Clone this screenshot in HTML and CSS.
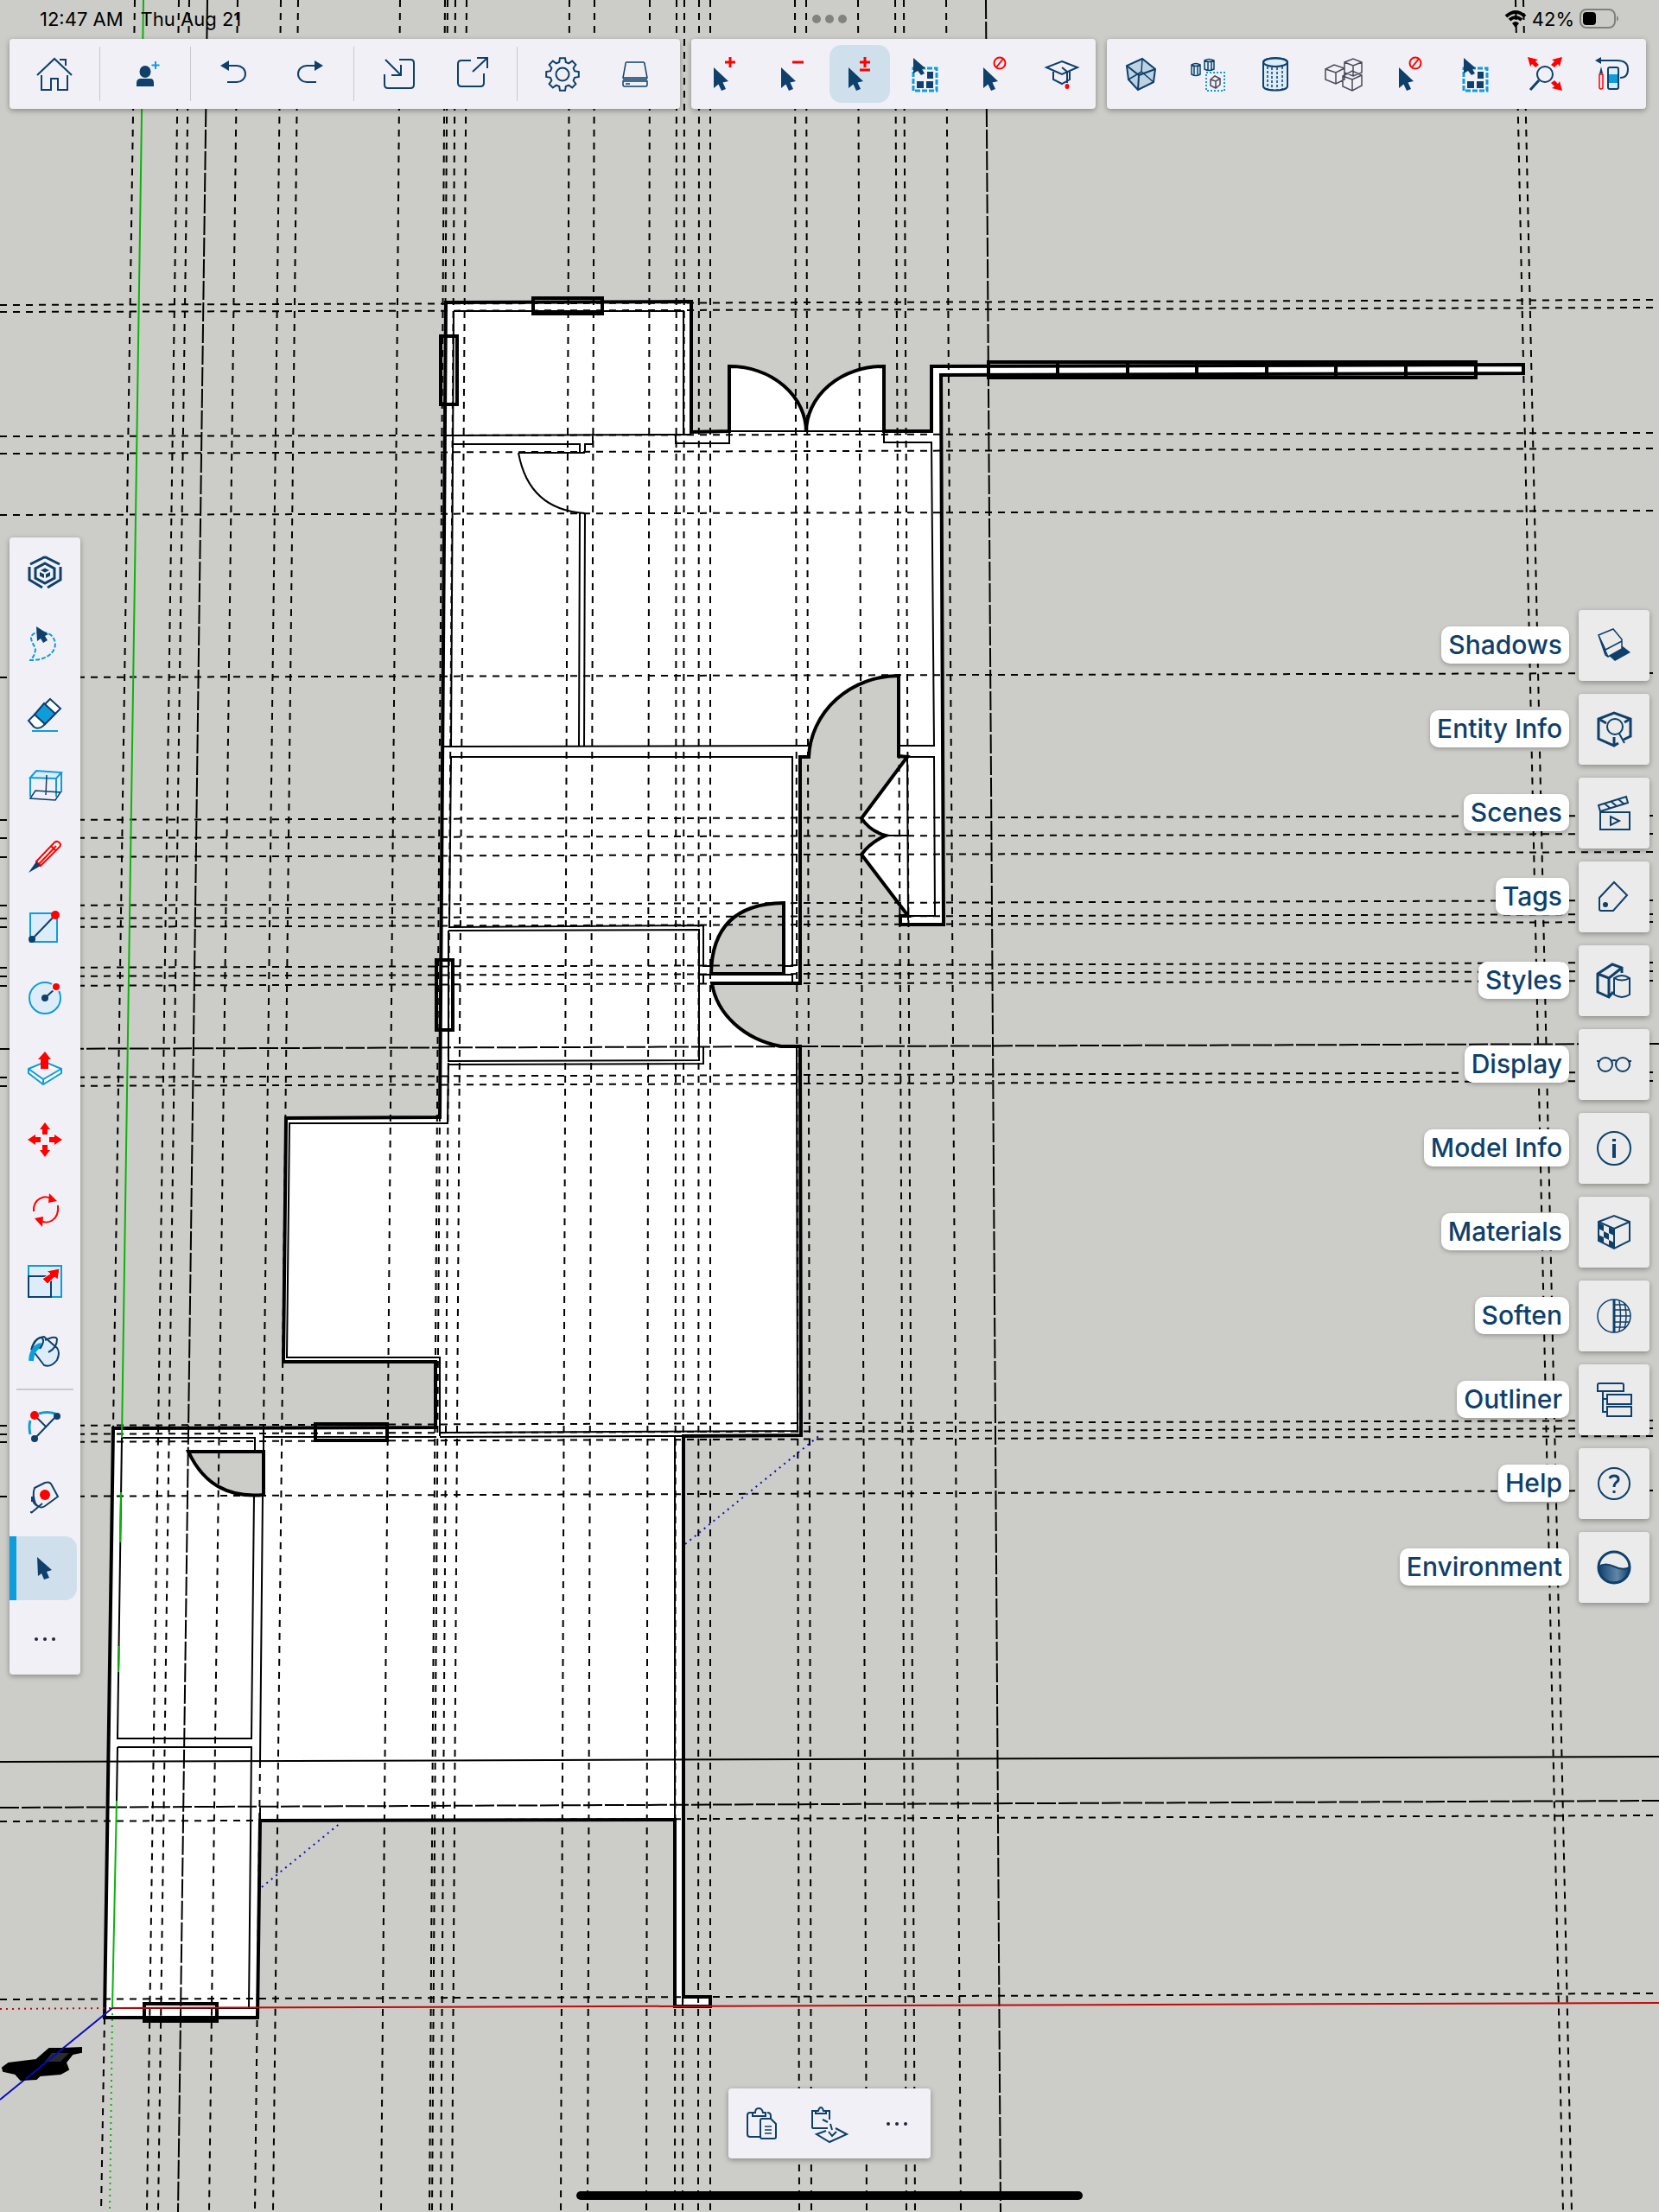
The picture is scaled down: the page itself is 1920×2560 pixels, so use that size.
FILE: index.html
```html
<!DOCTYPE html>
<html lang="en">
<head>
<meta charset="utf-8">
<meta name="viewport" content="width=device-width, initial-scale=1">
<title>Floor plan</title>
<link rel="stylesheet" href="styles.css">
</head>
<body>
<div class="app">
<svg class="model" viewBox="0 0 1920 2560" preserveAspectRatio="xMidYMid slice" role="img" aria-label="Floor plan model">
  <!-- outer shell -->
  <path class="face heavy" d="M516 350L800 349V500L844 499V424A89 76 0 0 1 933 500A89 76 0 0 1 1023 424V499H1078V424L1763 422V432L1089 434L1092 1070H1042V1060H1051L997 989Q1007 975 1025 967Q1007 962 997 947L1050 876L1040 875V782A104 98 0 0 0 936 876H926V1138H824A104 86 0 0 0 904 1211H926L927 1661L791 1662V2311H822V2322H781V2106L301 2107L298 2335H121L131 1653L504 1652V1576H328L331 1294L509 1293Z"/>
  <path class="gap heavy" d="M907 1045V1127H823Q824 1046 907 1045Z"/>
  <path class="gap heavy" d="M218 1680H305V1730Q244 1736 218 1680Z"/>
  <!-- inner wall faces -->
  <path class="thin" d="M516 504L791 503M525 360H791V503M525 360L522 864M523 514H671V523M677 523V514H686M686 504V514M671 594L670 864M677 594L676 864M512 864L937 863M600 524H677M600 524Q612 590 677 594"/>
  <path class="thin" d="M800 503H782V513H844V499H1023V512H1078L1081 863H1040M1050 876H1081L1082 1060H1042M1050 876L1051 1065M1025 967H1051"/>
  <path class="thin" d="M522 876H917V1118H908M522 876L520 1073L814 1071V1118H823M519 1077L809 1076V1227L519 1228V1077M809 1128H917V1138M814 1128V1138M814 1212V1231L519 1232L518 1300H335L332 1571H509V1662M509 1658L923 1656M922 1211L923 1656M509 1663L791 1662"/>
  <path class="thin" d="M505 1663H305M305 1653V1680M295 1680V1664H141L136 2012H291L294 1731M136 2022H291L288 2324M301 2092V2107M304 1731L301 2038M781 1662V2106M136 2022L135 2084M790 2311V2322M130 2324H298"/>
  <!-- windows -->
  <path class="heavy" d="M617 345H697V363H617ZM510 389H529V468H510ZM505 1111H524V1192H505ZM365 1648H448V1667H365ZM167 2319H251V2339H167ZM1144 419H1708V437H1144ZM1224 419V437M1305 419V437M1385 419V437M1466 419V437M1546 419V437M1627 419V437"/>
  <path class="thin" d="M519 1111V1192"/>
  <!-- vertical guides -->
  <path class="guide" d="M156 0L131 1653M121 2335L117 2560M207 0L170 2560M219 0L183 2560M275 0L242 2560M325 0L305 1653M301 2038L295 2560M345 0L316 2560M463 0L441 2560M515 0L497 2560M518 0L500 2560M527 0L510 2560M540 0L523 2560M659 0L649 2560M688 0L680 2560M752 0L748 2560M783 0L781 2560M792 0L790 2560M809 0L808 2560M822 0V2560M920 0L925 2560M933 0L939 2560M993 0L1003 2560M1036 0L1049 2560M1046 0L1059 2560M1095 0L1112 2560M1754 0L1809 2560M1763 0L1819 2560"/>
  <path class="guide-long" d="M240 0L206 2560M1141 0L1158 2560M0 1214L1920 1208M0 2092L1920 2084"/>
  <!-- horizontal guides -->
  <path class="guide" d="M0 353L1920 347M0 361L1920 356M0 505L1920 501M0 525L1920 519M0 596L1920 591M0 784L1920 779M0 949L1920 944M0 970L1920 965M0 992L1920 986M0 1048L1920 1042M0 1063L1920 1058M0 1073L1920 1067M0 1120L1920 1114M0 1130L1920 1124M0 1141L1920 1135M0 1247L1920 1241M0 1257L1920 1251M0 1650L1920 1644M0 1660L1920 1653M0 1669L1920 1662M0 1732L1920 1725M0 2108L1920 2101M0 2314L1920 2307"/>
  <path class="thin" d="M0 2039L1920 2033"/>
  <!-- axes -->
  <path class="axis green" d="M166 0L141 1664M140 1727L139 1785M138 1905L137 1935M135 2084L130 2324"/>
  <path class="axis red" d="M130 2324L1920 2318"/>
  <path class="axis blue" d="M130 2324L0 2430"/>
  <path class="axis green dotted" d="M130 2330L127 2560"/>
  <path class="axis red dotted" d="M0 2325L130 2324"/>
  <path class="axis blue dotted" d="M303 2184L395 2109M793 1787L950 1660"/>
  <!-- scale figure -->
  <path class="figure" d="M3 2393L10 2388 42 2384 57 2371H72L94 2370 94 2375 84 2377 76 2387 79 2395 70 2400 46 2402 42 2406 24 2407 18 2400 4 2397Z"/>
  <path class="coat" d="M60 2376H80L70 2386H52Z"/>
  <path class="axis blue" d="M75 2369L30 2406"/>
</svg>

<header class="top">
  <div class="status">
    <div class="status-side"><span>12:47 AM</span><span>Thu Aug 21</span></div>
    <div class="multitask"><i></i><i></i><i></i></div>
    <div class="status-side status-right">
      <svg width="26" height="22" viewBox="0 0 26 22"><path d="M2 8Q13-2 24 8M6 12Q13 6 20 12" fill="none" stroke="#000" stroke-width="4"/><path d="M9 16Q13 12 17 16L13 21Z"/></svg>
      <span>42%</span>
      <svg width="46" height="24" viewBox="0 0 46 24"><rect x="1" y="1" width="40" height="21" rx="7" fill="none" stroke="#80807c" stroke-width="2"/><rect x="4" y="4" width="15" height="15" rx="4"/><path d="M43 8q4 3.500 0 7z" fill="#80807c"/></svg>
    </div>
  </div>
  <div class="toolbars">
    <nav class="bar main-bar" aria-label="Main">
      <div class="group"><button aria-label="Home"><svg class="ic" viewBox="0 0 40 40"><path d="M0 21L20 2L40 21M26 3H33V10M5 21V38H16V25H24V38H35V21"/></svg></button></div>
      <div class="group"><button aria-label="Add person"><svg class="ic" viewBox="0 0 40 40"><g class="nf"><ellipse cx="20" cy="17" rx="6.500" ry="7"/><path d="M10 34V30Q10 25 15 25H26Q30 25 30 30V34Z"/></g><path class="b" d="M32 5V14M27.500 9.500H36.500"/></svg></button></div>
      <div class="group"><button aria-label="Undo"><svg class="ic" viewBox="0 0 40 40"><path class="nf" d="M2 10L12 4V16Z"/><path d="M11 10H21A10 9.500 0 0 1 21 29H10"/></svg></button><button aria-label="Redo"><svg class="ic" viewBox="0 0 40 40"><path class="nf" d="M37 10L27 4V16Z"/><path d="M28 10H18A10 9.500 0 0 0 18 29H29"/></svg></button></div>
      <div class="group"><button aria-label="Import"><svg class="ic" viewBox="0 0 40 40"><path d="M20 3H33Q37 3 37 7V32Q37 36 33 36H7Q3 36 3 32V20M4 3L21 20M22 9V21H11"/></svg></button><button aria-label="Export"><svg class="ic" viewBox="0 0 40 40"><path d="M19 4H8Q4 4 4 8V30Q4 34 8 34H30Q34 34 34 30V19M21 17L37 2M26 1H38V13"/></svg></button></div>
      <div class="group"><button aria-label="Settings"><svg class="ic" viewBox="-20 -20 40 40"><path d="M14-3.800L18.800-3V3L14 3.800 12.600 7.200 15.400 11.200 11.200 15.400 7.200 12.600 3.800 14 3 18.800H-3L-3.800 14-7.200 12.600-11.200 15.400-15.400 11.200-12.600 7.200-14 3.800-18.800 3V-3L-14-3.800-12.600-7.200-15.400-11.200-11.200-15.400-7.200-12.600-3.800-14-3-18.800H3L3.800-14 7.200-12.600 11.200-15.400 15.400-11.200 12.600-7.200Z"/><circle r="7.500"/></svg></button><button aria-label="Device"><svg class="ic s" viewBox="0 0 40 40"><path d="M10 6H29Q31 6 31 8L34 24H6L9 8Q9 6 10 6ZM6 28H34V32Q34 34 32 34H8Q6 34 6 32ZM9 31H14M6 26H34"/></svg></button></div>
    </nav>
    <nav class="bar" aria-label="Selection">
      <button aria-label="Add to selection"><svg class="ic" viewBox="0 0 40 40"><path class="nf" id="cur" d="M7 12L24 28L17.500 29.500L21 37L16 39L12.500 31.500L7 36Z"/><path class="r w" d="M26 0V12M20 6H32"/></svg></button>
      <button aria-label="Subtract from selection"><svg class="ic" viewBox="0 0 40 40"><use href="#cur" class="nf"/><path class="r w" d="M20 6H33"/></svg></button>
      <button class="on" aria-label="Toggle selection" aria-pressed="true"><svg class="ic" viewBox="0 0 40 40"><use href="#cur" class="nf"/><path class="r w" d="M26 0V12M20 6H32M20 15H32"/></svg></button>
      <button aria-label="Select all"><svg class="ic" viewBox="0 0 40 40"><g id="selall"><rect class="b w" x="4" y="13" width="27" height="26" stroke-dasharray="6 2"/><path class="nf" stroke="#f1f0f6" stroke-width="1" d="M4 1L18 13L14 14L17 19L13 21L9 16L4 19Z"/><path class="nf" d="M20 17H27V25H20ZM8 28H16V36H8ZM19 28H27V36H19Z"/></g></svg></button>
      <button aria-label="Clear selection"><svg class="ic" viewBox="0 0 40 40"><use href="#cur" class="nf"/><g id="ban" class="r"><circle cx="26" cy="7" r="6.500"/><path d="M22 12L30 2"/></g></svg></button>
      <button aria-label="Learn"><svg class="ic" viewBox="0 0 40 40"><path d="M20 5L38 12L20 20L2 12ZM10 17V26L20 31L29 26V17M20 12L26 17V30"/><ellipse cx="26" cy="34" rx="2.500" ry="3" fill="red" stroke="none"/></svg></button>
    </nav>
    <nav class="bar" aria-label="View">
      <button aria-label="X-ray"><svg class="ic" viewBox="0 0 40 40"><path fill="#bdd2e2" d="M22 2L4 10L6 26L17 38L35 29L37 14Z"/><path d="M4 10L18 21L37 14M18 21L17 38"/><path class="s" d="M22 2L21 17M6 26L21 17L35 29"/></svg></button>
      <button aria-label="Hide similar"><svg class="ic s" viewBox="0 0 40 40"><path fill="#dcedf9" d="M1 9V20Q6 23 11 20V9Q6 6 1 9ZM16 4V14Q21 17 27 14V4Q21 1 16 4ZM1 9Q6 12 11 9M16 4Q21 7 27 4M4 11V20M8 11V20M20 6V15M24 6V15"/><rect class="b" x="18" y="18" width="21" height="21" stroke-width="2" stroke-dasharray="2 2"/><path class="k" d="M23 26L28 22L34 25V32L29 36L23 33ZM23 26L29 28L34 25M29 28V36"/></svg></button>
      <button aria-label="Component"><svg class="ic" viewBox="0 0 40 40"><path fill="#dcedf9" d="M6 6V34C7 40 33 40 34 34V6C33 0 7 0 6 6Z"/><ellipse cx="20" cy="6" rx="14" ry="5"/><path class="s" stroke-dasharray="3 2" d="M11 11V37M16 12V38M22 12V38M28 11V37"/></svg></button>
      <button aria-label="Hide rest"><svg class="ic s k" viewBox="0 0 40 40"><path fill="#f1f0f6" d="M22 6L32 2L42 6V18L32 22L22 18ZM22 6L32 10L42 6M32 10V22M0 14L10 9L22 13V26L12 31L0 26ZM0 14L12 18L22 13M12 18V31M20 22L31 16L42 21V33L31 39L20 34ZM20 22L31 26L42 21M31 26V39"/></svg></button>
      <button aria-label="Deselect"><svg class="ic" viewBox="0 0 40 40"><use href="#cur" class="nf"/><use href="#ban"/></svg></button>
      <button aria-label="Select everything"><svg class="ic" viewBox="0 0 40 40"><use href="#selall"/></svg></button>
      <button aria-label="Zoom extents"><svg class="ic" viewBox="0 0 40 40"><circle cx="20" cy="20" r="9"/><path class="w" d="M13 27L3 38"/><g fill="red" stroke="none"><path d="M0 0L12 3L9 5L13 9L9 12L5 8L3 11ZM40 0L28 3L31 5L27 9L31 12L35 8L37 11ZM40 39L28 36L31 34L27 30L31 27L35 31L37 28Z"/></g></svg></button>
      <button aria-label="Markup history"><svg class="ic" viewBox="0 0 40 40"><path class="nf" d="M0 4L7 0V8Z"/><path d="M6 4H25Q38 4 38 14Q38 24 29 24"/><rect x="15" y="12" width="12" height="25" rx="2" fill="#dcedf9"/><rect x="16" y="20" width="10" height="10" fill="#0d9ddb" stroke="none"/><path class="r s" d="M5 20H9V35Q9 37 7 37Q5 37 5 35Z"/><path class="nf" d="M7 11L9 19H5Z"/></svg></button>
    </nav>
  </div>
</header>

<main class="middle">
  <nav class="palette" aria-label="Tools">
    <button aria-label="SketchUp"><svg class="ic w" viewBox="0 0 40 40"><path d="M3 10L17 3Q20 1 23 3L37 10M2 13V28L17 37M38 13V28L23 37M20 9L31 15V26L20 32L9 26V15Z"/><path class="nf" d="M15 17L20 14.500L25 17L20 19.500ZM14 19L19 21.500V26L14 23.500ZM26 19L21 21.500V26L26 23.500Z"/></svg></button>
    <button aria-label="Lasso"><svg class="ic" viewBox="0 0 40 40"><path class="b" stroke-dasharray="5 2" d="M2 39H8C34 36 36 18 27 10C19 4 3 6 4 14Q5 19 9 25Q9 34 3 39"/><path class="nf" d="M10 0L24 9L20 11L23 16L18 19L15 14L11 17Z"/></svg></button>
    <button aria-label="Eraser"><svg class="ic" viewBox="0 0 40 40"><path fill="#fff" d="M26 2L38 13L18 33Q12 38 7 34L1 27Z"/><path fill="#0d9ddb" d="M19 7L32 19L20 31L8 20Z"/><path class="b" d="M5 39H35"/></svg></button>
    <button aria-label="Section plane"><svg class="ic" viewBox="0 0 40 40"><path class="b" fill="#dcedf9" d="M3 11L10 3L39 5L33 12Z"/><path class="b" d="M3 11V33M33 12V33M39 5V28"/><path class="s" d="M22 8L21 31M3 35L9 26L38 28L32 37Z"/></svg></button>
    <button aria-label="Line"><svg class="ic" viewBox="0 0 40 40"><path class="r" fill="#fff" d="M10 26L31 4Q35 1 38 6Q38 9 35 11L15 31ZM27 8L32 13M13 29L33 8"/><path class="nf" d="M10 26L15 31L1 39Z"/></svg></button>
    <button aria-label="Rectangle"><svg class="ic" viewBox="0 0 40 40"><rect class="b" x="3" y="4" width="31" height="33" fill="#dcedf9"/><path d="M5 34L32 6"/><circle class="nf" cx="5" cy="34" r="4"/><circle cx="32" cy="6" r="5" fill="red" stroke="none"/></svg></button>
    <button aria-label="Circle"><svg class="ic" viewBox="0 0 40 40"><circle class="b" cx="20" cy="20" r="18" fill="#dcedf9"/><path d="M20 20L32 9"/><circle class="nf" cx="20" cy="20" r="4"/><circle cx="33" cy="7" r="5" fill="red" stroke="#f1f0f6"/></svg></button>
    <button aria-label="Push pull"><svg class="ic" viewBox="0 0 40 40"><path class="b" fill="#fff" d="M1 20L20 12L39 20V25L18 38L1 25ZM1 20L18 32L39 20M18 32V38"/><path d="M20 0L27 9H24V20H15V9H12Z" fill="red" stroke="none"/></svg></button>
    <button aria-label="Move"><svg class="ic" viewBox="0 0 40 40"><path fill="red" stroke="none" d="M20 0L26 8H23V14H17V8H14ZM20 40L26 32H23V26H17V32H14ZM0 20L9 14V17H15V23H9V26ZM40 20L31 14V17H25V23H31V26Z"/></svg></button>
    <button aria-label="Rotate"><svg class="ic" viewBox="0 0 40 40"><path class="r" d="M7 21C6 6 20 1 28 7M35 14C37 32 22 37 14 31"/><path fill="red" stroke="none" d="M25 0L34 9L24 11ZM17 39L8 29L18 27Z"/></svg></button>
    <button aria-label="Scale"><svg class="ic" viewBox="0 0 40 40"><rect class="b" x="1" y="2" width="38" height="36" fill="#dcedf9"/><path d="M1 14H27V38H1Z"/><path d="M37 5L35 18L31 15L23 23L17 17L26 11L22 8Z" fill="red" stroke="#f1f0f6" stroke-width="1"/></svg></button>
    <button aria-label="Paint"><svg class="ic" viewBox="0 0 40 40"><path fill="#dcedf9" d="M5 15Q8 3 19 2L34 15Q38 20 34 29Q27 38 19 35L6 18"/><path stroke="#0d9ddb" stroke-width="6" d="M4 30Q5 14 16 12"/><path d="M4 17Q9 3 16 3Q21 6 14 16M20 6Q33 0 34 5Q34 15 24 20"/></svg></button>
    <hr>
    <button aria-label="Arc"><svg class="ic" viewBox="0 0 40 40"><path class="b w" d="M13 5Q22 2 32 5M3 13Q1 20 3 29"/><path d="M8 34L33 8M9 8L22 21"/><circle class="nf" cx="8" cy="34" r="4"/><circle class="nf" cx="34" cy="8" r="4"/><circle cx="8" cy="7" r="5" fill="red" stroke="none"/></svg></button>
    <button aria-label="Tape measure"><svg class="ic" viewBox="0 0 40 40"><path d="M8 9L20 3Q26 1 28 6L35 19L20 30Q14 34 9 27Q5 17 8 9ZM6 20Q5 28 14 31M4 38L17 27M4 38V36M5 19L5 25"/><circle cx="20" cy="17" r="6" fill="red" stroke="none"/></svg></button>
    <button class="on" aria-label="Select" aria-pressed="true"><svg class="ic" viewBox="0 0 40 40"><path class="nf" d="M11 7L28 22L22 24L25 31L19 33L16 26L12 29Z"/></svg></button>
    <button aria-label="More tools"><svg class="ic" viewBox="0 0 40 40"><path class="dots" d="M10 20h.01M20 20h.01M30 20h.01"/></svg></button>
  </nav>

  <aside class="panels" aria-label="Panels">
    <button><span class="label">Shadows</span><span class="tile"><svg class="ic s" viewBox="0 0 40 40"><path class="nf" d="M12 30L30 21L39 28L21 38Z"/><path fill="#ebebeb" d="M2 8L19 1L29 13V24L13 33L10 31ZM10 25L29 15M2 8L10 25V31M4 13L13 33"/></svg></span></button>
    <button><span class="label">Entity Info</span><span class="tile"><svg class="ic w" viewBox="0 0 40 40"><path d="M31 32L39 28V8L20 1L2 8V31L20 39L25 36M4 9L11 13M37 9L32 12M20 38V29"/><circle class="n" cx="21" cy="17" r="9"/><path class="n" d="M26 25L32 36"/></svg></span></button>
    <button><span class="label">Scenes</span><span class="tile"><svg class="ic" viewBox="0 0 40 40"><path d="M4 19H38V39H4ZM16 24V34L26 29ZM2 11L34 1L36 8L4 18ZM9 9L15 14M17 7L23 12M25 4L31 9"/></svg></span></button>
    <button><span class="label">Tags</span><span class="tile"><svg class="ic" viewBox="0 0 40 40"><path d="M20 3L35 18L19 36H5Q3 36 3 34V21Z"/><circle class="nf" cx="10" cy="29" r="3"/></svg></span></button>
    <button><span class="label">Styles</span><span class="tile"><svg class="ic w" viewBox="0 0 40 40"><path d="M19 33L14 39L1 33V12L18 1L29 5V11M1 12L14 17L29 5M14 17V39"/><path class="n" fill="#ebebeb" d="M20 17V36Q29 42 38 36V17Q29 11 20 17ZM20 17Q29 22 38 17"/></svg></span></button>
    <button><span class="label">Display</span><span class="tile"><svg class="ic" viewBox="0 0 40 40"><circle cx="10" cy="20" r="8"/><circle cx="30" cy="20" r="8"/><path d="M0 16H4M36 16H40M17 16Q20 14 23 16"/></svg></span></button>
    <button><span class="label">Model Info</span><span class="tile"><svg class="ic" viewBox="0 0 40 40"><circle cx="20" cy="20" r="19"/><path class="nf" d="M18 9H22V12H18ZM18 15H22V31H18Z"/></svg></span></button>
    <button><span class="label">Materials</span><span class="tile"><svg class="ic" viewBox="0 0 40 40"><path d="M2 8L20 1L38 8V30L20 39L2 30ZM2 8L20 16L38 8M20 16V39"/><path class="nf" d="M2 9L8 12V19L2 16ZM14 14L20 17V24L14 21ZM8 19L14 22V29L8 26ZM2 23L8 26V33L2 30ZM14 29L20 32V39L14 36Z"/></svg></span></button>
    <button><span class="label">Soften</span><span class="tile"><svg class="ic s" viewBox="0 0 40 40"><circle cx="20" cy="20" r="19"/><path class="w" d="M20 1V39"/><path d="M20 7H34M20 13H38M20 20H39M20 27H38M20 33H34M26 2Q29 20 26 38M32 5Q36 20 32 35"/></svg></span></button>
    <button><span class="label">Outliner</span><span class="tile"><svg class="ic" viewBox="0 0 40 40"><path d="M3 1H29Q31 1 31 3V10H1V3Q1 1 3 1ZM12 14H40V25H12ZM12 28H40V39H12ZM7 10V34H12M7 19H12"/></svg></span></button>
    <button><span class="label">Help</span><span class="tile"><svg class="ic" viewBox="0 0 40 40"><circle cx="20" cy="20" r="18"/><path class="w" d="M15 14Q16 11 20 11Q25 11 25 15Q25 17 22 19Q20 21 20 24M20 28V31"/></svg></span></button>
    <button><span class="label">Environment</span><span class="tile"><svg class="ic" viewBox="0 0 40 40"><defs><linearGradient id="sea" x1="0" x2="1"><stop stop-color="#0e406b"/><stop offset=".6" stop-color="#6187a8"/><stop offset="1" stop-color="#0e406b"/></linearGradient></defs><path d="M2 19Q10 14 20 19Q30 24 38 20A18 18 0 0 1 2 19Z" fill="url(#sea)"/><circle class="w" cx="20" cy="20" r="18"/></svg></span></button>
  </aside>
</main>

<footer class="bottom">
  <nav class="bar" aria-label="Clipboard">
    <button aria-label="Paste"><svg class="ic" viewBox="0 0 40 40"><path d="M9 7H6Q3 7 3 10V32Q3 35 6 35H18M26 7Q30 7 30 11V15M9 7V11H24V7H21Q20 2 16 2Q12 2 12 7ZM20 14H30L36 20V35Q36 37 34 37H20Q18 37 18 35V16Q18 14 20 14Z"/><path class="s" d="M23 23H31M23 27H31M23 31H31"/></svg></button>
    <button aria-label="Paste in place"><svg class="ic" viewBox="0 0 40 40"><path d="M4 5H0V24Q0 25 2 25H18M16 5H20V15M4 5V8H16V5H13Q12 1 10 1Q8 1 7 5ZM16 28L5 32L20 41L40 32L27 25M12 15L18 18M21 20L23 27M19 29L23 34L28 29"/></svg></button>
    <button aria-label="More"><svg class="ic" viewBox="0 0 40 40"><path class="dots" d="M10 20h.01M20 20h.01M30 20h.01"/></svg></button>
  </nav>
  <div class="home-indicator"></div>
</footer>
</div>
</body>
</html>
```
FILE: styles.css
```css
* { box-sizing: border-box; }
body { margin: 0; background: #cccdc8; font-family: Inter, "Liberation Sans", sans-serif; }
button { border: 0; padding: 0; background: none; font: inherit; color: inherit; display: flex; align-items: center; justify-content: center; cursor: pointer; }

.app { position: relative; min-height: 100vh; display: grid; grid-template-rows: 1fr auto 1fr; overflow: hidden; }
.top, .middle, .bottom { position: relative; }

/* model canvas, behind every control */
.model { position: absolute; inset: 0; width: 100%; height: 100%; }
.model path { fill: none; }
.model .face { fill: #fff; }
.model .gap { fill: #cccdc8; }
.model .figure { fill: #000; stroke: #000; stroke-width: 2; }
.model .coat { fill: #262c30; }
.heavy { stroke: #000; stroke-width: 4; }
.thin { stroke: #000; stroke-width: 2; }
.guide { stroke: #000; stroke-width: 2; stroke-dasharray: 8 7; }
.guide-long { stroke: #000; stroke-width: 2; stroke-dasharray: 22 3; }
.axis { stroke-width: 2; }
.green { stroke: #0ab40a; }
.red { stroke: #c00a0a; }
.blue { stroke: #0a0ac0; }
.dotted { stroke-dasharray: 2 5; }

/* status line */
.status { height: 45px; padding: 0 46px; display: grid; grid-template-columns: 1fr auto 1fr; align-items: start; font-size: 22px; line-height: 44px; color: #000; }
.status-side, .multitask { display: flex; align-items: center; height: 44px; }
.status-side { gap: 20px; }
.status-right { justify-content: flex-end; gap: 6px; }
.multitask { gap: 5px; }
.multitask i { width: 10px; height: 10px; border-radius: 50%; background: #82827e; }

/* toolbars */
.toolbars { display: flex; justify-content: space-between; padding: 0 15px 0 11px; }
.bar { display: flex; align-items: center; height: 81px; gap: 8px; padding: 0 4px; background: #f1f0f6; border-radius: 4px; box-shadow: 0 2px 6px #00000055; }
.bar button { width: 70px; height: 67px; border-radius: 14px; }
.bar .on { background: #cfe0ec; }
.main-bar { gap: 0; padding: 0; }
.group { display: flex; padding: 0 10px; height: 63px; align-items: center; }
.group + .group { border-left: 1px solid #c8c8ce; }
.group button { width: 84px; }

.middle { display: flex; align-items: center; justify-content: space-between; padding: 0 11px; }
.palette { width: 82px; background: #f1f0f6; border-radius: 4px; box-shadow: 0 2px 6px #00000055; }
.palette button { width: 82px; height: 82px; }
.palette hr { margin: 1px 8px; border: 0; height: 2px; background: #c8c8ce; }
.palette .on { width: 78px; height: 74px; margin: 4px 0; border-left: 8px solid #0d9ddb; border-radius: 0 14px 14px 0; background: #cfe0ec; }
.palette .on .ic { margin-left: -4px; }

.panels { display: flex; flex-direction: column; align-items: flex-end; gap: 15px; }
.panels button { gap: 11px; }
.label { padding: 0 8px; border-radius: 10px; background: #fff; box-shadow: 0 2px 5px #00000040; color: #0e406b; font-size: 30px; font-weight: 500; line-height: 43px; }
.tile { width: 82px; height: 82px; display: flex; align-items: center; justify-content: center; background: #ebebeb; border-radius: 4px; box-shadow: 0 2px 6px #00000055; }

.bottom { display: flex; flex-direction: column; align-items: center; justify-content: flex-end; gap: 38px; padding-bottom: 14px; }
.home-indicator { width: 30.5%; height: 10px; border-radius: 5px; background: #000; }

/* icons */
.ic { width: 40px; height: 40px; overflow: visible; fill: none; stroke: #0e406b; stroke-width: 2; }
.ic .nf { fill: #0e406b; stroke: none; }
.ic .b { stroke: #0d9ddb; }
.ic .r { stroke: #f00; }
.ic.k, .ic .k { stroke: #4a4a5a; }
.ic.s, .ic .s { stroke-width: 1.5; }
.ic.w, .ic .w { stroke-width: 3; }
.ic .n { stroke-width: 2; }
.ic .dots { stroke: #23233a; stroke-width: 4; stroke-linecap: round; }
```
